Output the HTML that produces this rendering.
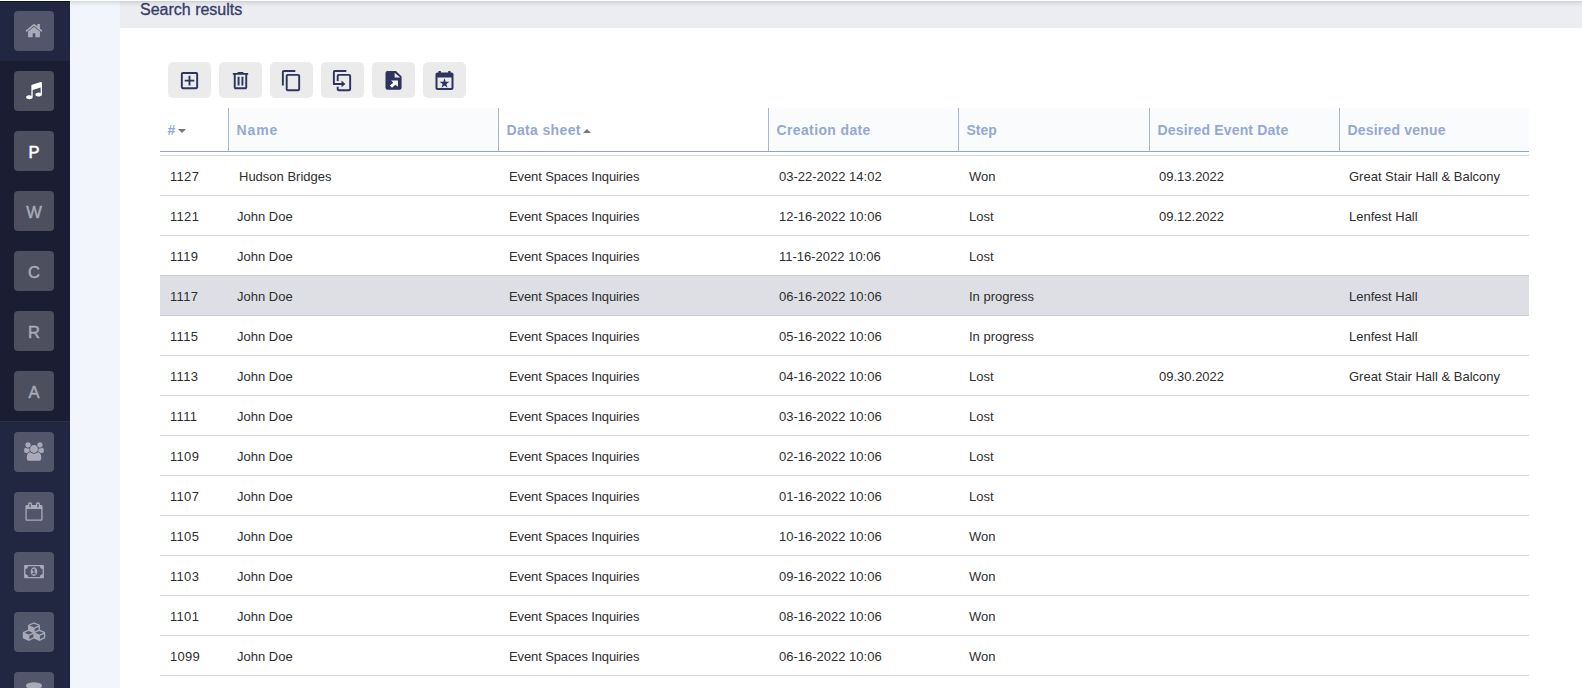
<!DOCTYPE html>
<html lang="en"><head><meta charset="utf-8"><title>Search results</title>
<style>
*{box-sizing:border-box}
html,body{margin:0;padding:0}
body{width:1582px;height:688px;overflow:hidden;position:relative;background:#f2f6fc;font-family:"Liberation Sans","DejaVu Sans",sans-serif;font-size:13px;color:#2e2e2e}
#side{position:absolute;left:0;top:0;width:70px;height:688px;background:#1b1e33}
#side .s1{position:absolute;left:0;top:0;width:70px;height:61px;background:#212741}
#side .s2{position:absolute;left:0;top:421px;width:70px;height:267px;background:#212741;border-top:1px solid #2a2f48}
.sb{position:absolute;left:14px;width:40px;height:40px;border-radius:4px;background:rgba(255,255,255,0.22);color:#a8aab8;font-size:16.500px;text-align:center;line-height:42px;-webkit-text-stroke:0.5px}
.sb.on{color:#fff}
.sb svg{position:absolute;fill:#a8aab8}
.sb.on svg{fill:#fff}
#side .lt{background:#535870}
#panel{position:absolute;left:120px;top:0;width:1462px;height:688px;background:#fff}
#hdr{position:absolute;left:120px;top:0;width:1462px;height:28px;background:#ecedf1}
#hdr span{position:absolute;left:20px;top:0px;font-size:16px;color:#3a3d6b;line-height:20px;-webkit-text-stroke:0.35px #3a3d6b}
#shade{position:absolute;left:70px;top:1px;width:1512px;height:6px;background:linear-gradient(rgba(10,20,60,0.14),rgba(10,20,60,0.05) 40%,rgba(10,20,60,0))}
#topw{position:absolute;left:0;top:0;width:1582px;height:1px;background:#fff}
#topd{position:absolute;left:0;top:1px;width:70px;height:1px;background:#10132d}
.tb{position:absolute;top:62px;width:43px;height:36px;border-radius:5px;background:#ebebeb}
.tb svg{position:absolute;left:9px;top:6px;fill:#2e345f}
#th{position:absolute;left:160px;top:108px;width:1369px;height:44px;border-bottom:1px solid #8ea6cf;background:#fafbfd}
#th div{position:absolute;top:0;height:43px;border-left:1px solid #a9b5cc;padding-left:7.500px;line-height:45px;font-weight:bold;font-size:14px;color:#95a9d0;white-space:nowrap}
#th div.w{background:#fff}
#th div:first-child{border-left:none}
#gl{position:absolute;left:160px;top:155px;width:1369px;height:1px;background:#d6d6d6}
.row{position:absolute;left:160px;width:1369px;height:40px;border-bottom:1px solid #d6d6d6}
.row .c2{letter-spacing:-0.12px}
.row .c0{letter-spacing:0.3px}
.row span{position:absolute;top:0;line-height:42px;white-space:nowrap}
.row.sel{background:#dddfe4;border-bottom-color:#c9ccd3;box-shadow:0 -1px 0 #c9ccd3}
.arr{display:inline-block;width:0;height:0;border-left:4px solid transparent;border-right:4px solid transparent;vertical-align:middle;margin-left:3px}
.arr.d{border-top:4px solid #777}
.arr.u{border-bottom:4px solid #777}
</style></head><body>
<div id="panel"></div>
<div id="hdr"><span>Search results</span></div>
<div id="shade"></div>
<div id="side"><div class="s1"></div><div class="s2"></div>
<div class="sb " style="top:11px"><svg class="fa " style="left:10px;top:11px" width="19" height="16" viewBox="0 0 19 16"><path transform="translate(0.750,-0.635) scale(0.010324)" d="M1472 992v480q0 26-19 45t-45 19h-384v-384h-256v384h-384q-26 0-45-19t-19-45v-480q0-1 .5-3t.5-3l575-474 575 474q1 2 1 6zm223-69l-62 74q-8 9-21 11h-3q-13 0-21-7l-692-577-692 577q-12 8-24 7-13-2-21-11l-62-74q-8-10-7-23.500t11-21.500l719-599q32-26 76-26t76 26l244 204v-195q0-14 9-23t23-9h192q14 0 23 9t9 23v408l219 182q10 8 11 21.500t-7 23.500z"/></svg></div>
<div class="sb on" style="top:71px"><svg class="fa " style="left:11px;top:10px" width="18" height="20" viewBox="0 0 18 20"><path transform="translate(-0.250,-0.311) scale(0.010324)" d="M1664 224v1120q0 50-34 89t-86 60.500-103.500 32-96.500 10.500-96.500-10.500-103.500-32-86-60.500-34-89 34-89 86-60.500 103.500-32 96.500-10.500q105 0 192 39v-537l-768 237v709q0 50-34 89t-86 60.500-103.500 32-96.500 10.500-96.500-10.500-103.500-32-86-60.500-34-89 34-89 86-60.500 103.500-32 96.500-10.500q105 0 192 39v-967q0-31 19-56.500t49-35.500l832-256q12-4 28-4 40 0 68 28t28 68z"/></svg></div>
<div class="sb on" style="top:131px">P</div>
<div class="sb " style="top:191px">W</div>
<div class="sb " style="top:251px">C</div>
<div class="sb " style="top:311px">R</div>
<div class="sb " style="top:371px">A</div>
<div class="sb " style="top:432px"><svg class="fa " style="left:9px;top:9px" width="22" height="21" viewBox="0 0 22 21"><path transform="translate(1.750,1.350) scale(0.010324)" d="M529 896q-162 5-265 128h-134q-82 0-138-40.500t-56-118.500q0-353 124-353 6 0 43.500 21t97.500 42.500 119 21.500q67 0 133-23-5 37-5 66 0 139 81 256zm1071 637q0 120-73 189.500t-194 69.500h-874q-121 0-194-69.500t-73-189.500q0-53 3.500-103.500t14-109 26.500-108.500 43-97.500 62-81 85.500-53.500 111.500-20q10 0 43 21.500t73 48 107 48 135 21.500 135-21.500 107-48 73-48 43-21.500q61 0 111.500 20t85.500 53.500 62 81 43 97.500 26.500 108.500 14 109 3.500 103.500zm-1024-1277q0 106-75 181t-181 75-181-75-75-181 75-181 181-75 181 75 75 181zm704 384q0 159-112.500 271.500t-271.500 112.500-271.500-112.500-112.500-271.500 112.500-271.500 271.500-112.500 271.500 112.500 112.500 271.500zm576 225q0 78-56 118.500t-138 40.500h-134q-103-123-265-128 81-117 81-256 0-29-5-66 66 23 133 23 59 0 119-21.500t97.500-42.500 43.500-21q124 0 124 353zm-128-609q0 106-75 181t-181 75-181-75-75-181 75-181 181-75 181 75 75 181z"/></svg></div>
<div class="sb " style="top:492px"><svg class="fa " style="left:10px;top:9px" width="20" height="21" viewBox="0 0 20 21"><path transform="translate(0.750,1.350) scale(0.010324)" d="M192 1664h1408v-1024h-1408v1024zm384-1216v-288q0-14-9-23t-23-9h-64q-14 0-23 9t-9 23v288q0 14 9 23t23 9h64q14 0 23-9t9-23zm768 0v-288q0-14-9-23t-23-9h-64q-14 0-23 9t-9 23v288q0 14 9 23t23 9h64q14 0 23-9t9-23zm384-64v1280q0 52-38 90t-90 38h-1408q-52 0-90-38t-38-90v-1280q0-52 38-90t90-38h128v-96q0-66 47-113t113-47h64q66 0 113 47t47 113v96h384v-96q0-66 47-113t113-47h64q66 0 113 47t47 113v96h128q52 0 90 38t38 90z"/></svg></div>
<div class="sb " style="top:552px"><svg class="fa " style="left:9px;top:11px" width="22" height="16" viewBox="0 0 22 16"><path transform="translate(1.089,-0.650) scale(0.010324)" d="M768 1152h384v-96h-128v-448h-114l-148 137 77 80q42-37 55-57h2v288h-128v96zm512-256q0 70-21 142t-59.500 134-101.500 101-138 39-138-39-101.500-101-59.500-134-21-142 21-142 59.500-134 101.500-101 138-39 138 39 101.500 101 59.500 134 21 142zm512 256v-512q-106 0-181-75t-75-181h-1152q0 106-75 181t-181 75v512q106 0 181 75t75 181h1152q0-106 75-181t181-75zm128-832v1152q0 26-19 45t-45 19h-1792q-26 0-45-19t-19-45v-1152q0-26 19-45t45-19h1792q26 0 45 19t19 45z"/></svg></div>
<div class="sb " style="top:612px"><svg class="fa " style="left:7px;top:9px" width="25" height="21" viewBox="0 0 25 21"><path transform="translate(1.768,1.350) scale(0.010324)" d="M640 1632l384-192v-314l-384 164v342zm-64-454l404-173-404-173-404 173zm1088 454l384-192v-314l-384 164v342zm-64-454l404-173-404-173-404 173zm-448-293l384-165v-266l-384 164v267zm-64-379l441-189-441-189-441 189zm1088 518v416q0 36-19 67t-52 47l-448 224q-25 14-57 14t-57-14l-448-224q-4-2-7-4-2 2-7 4l-448 224q-25 14-57 14t-57-14l-448-224q-33-16-52-47t-19-67v-416q0-38 21.500-70t56.500-48l434-186v-400q0-38 21.500-70t56.500-48l448-192q23-10 50-10t50 10l448 192q35 16 56.500 48t21.500 70v400l434 186q36 16 57 48t21 70z"/></svg></div>
<div class="sb " style="top:672px"><svg class="fa " style="left:11px;top:9px" width="18" height="21" viewBox="0 0 18 21"><path transform="translate(-0.250,1.350) scale(0.010324)" d="M896 768q237 0 443-43t325-127v170q0 69-103 128t-280 93.500-385 34.500-385-34.500-280-93.500-103-128v-170q119 84 325 127t443 43zm0 768q237 0 443-43t325-127v170q0 69-103 128t-280 93.500-385 34.500-385-34.500-280-93.500-103-128v-170q119 84 325 127t443 43zm0-384q237 0 443-43t325-127v170q0 69-103 128t-280 93.500-385 34.500-385-34.500-280-93.500-103-128v-170q119 84 325 127t443 43zm0-1152q208 0 385 34.500t280 93.500 103 128v128q0 69-103 128t-280 93.500-385 34.500-385-34.500-280-93.500-103-128v-128q0-69 103-128t280-93.500 385-34.500z"/></svg></div>
</div>
<div class="tb" style="left:168px"><svg viewBox="0 0 26 26" width="26" height="26"><g transform="translate(1,1.1) scale(0.958)"><path d="M19 3H5c-1.11 0-2 .9-2 2v14c0 1.1.89 2 2 2h14c1.1 0 2-.9 2-2V5c0-1.1-.9-2-2-2zm0 16H5V5h14v14zm-8-2h2v-4h4v-2h-4V7h-2v4H7v2h4z"/></g></svg></div>
<div class="tb" style="left:219px"><svg viewBox="0 0 26 26" width="26" height="26"><g transform="translate(1,1.1) scale(0.958)"><path d="M7 21q-.825 0-1.412-.587Q5 19.825 5 19V6H4V4h5V3h6v1h5v2h-1v13q0 .825-.587 1.413Q17.825 21 17 21ZM17 6H7v13h10ZM9 17h2V8H9Zm4 0h2V8h-2ZM7 6v13Z"/></g></svg></div>
<div class="tb" style="left:270px"><svg viewBox="0 0 26 26" width="26" height="26"><g transform="translate(1,1.1) scale(0.958)"><path d="M16 1H4c-1.1 0-2 .9-2 2v14h2V3h12V1zm3 4H8c-1.1 0-2 .9-2 2v14c0 1.1.9 2 2 2h11c1.1 0 2-.9 2-2V7c0-1.1-.9-2-2-2zm0 16H8V7h11v14z"/></g></svg></div>
<div class="tb" style="left:321px"><svg viewBox="0 0 26 26" width="26" height="26"><g transform="translate(1,1.1) scale(0.958)"><path d="M16 1H4c-1.1 0-2 .9-2 2v13.5h9V19l4-3.500-4-3.500v2.500H4V3h12z"/><path d="M19 5H8c-1.1 0-2 .9-2 2v5.500h2V7h11v14H8v-2.500H6V21c0 1.100.9 2 2 2h11c1.100 0 2-.9 2-2V7c0-1.100-.9-2-2-2z"/></g></svg></div>
<div class="tb" style="left:372px"><svg viewBox="0 0 26 26" width="26" height="26"><g transform="translate(0.5,0.5)"><path d="M6 2.400h8.500l5.600 5.600v11.300a2 2 0 0 1-2 2H6a2 2 0 0 1-2-2V4.400a2 2 0 0 1 2-2z"/><path fill="#ebebeb" d="M13.100 4.200v4.800h5.700z"/><path fill="#fff" d="M16.400 12.100H9.600l2.200 2.200-3.500 2.700 2.200 2.200 3.500-2.900 2.400 1.900z"/></g></svg></div>
<div class="tb" style="left:423px"><svg viewBox="0 0 26 26" width="26" height="26"><g transform="translate(0.5,0.8)"><path d="M19 3.700h-1V2.300h-2.300v1.400H8.300V2.300H6v1.400H5c-1.110 0-2 .9-2 2V19.300c0 1.100.89 2 2 2h14c1.100 0 2-.9 2-2V5.700c0-1.100-.9-2-2-2zm0 15.600H5V8.700h14z"/><path transform="translate(12 14.4) scale(1.1) translate(-12 -14.2)" d="M12 9.700l1.060 3.260h3.430l-2.780 2.020 1.060 3.260L12 16.220l-2.770 2.020 1.060-3.260-2.780-2.020h3.430z"/></g></svg></div>
<div id="topw"></div><div id="topd"></div>
<div id="th">
<div class="w" style="left:0;width:68px"><b style="letter-spacing:0px">#</b><i class="arr d"></i></div>
<div style="left:68px;width:270px"><b style="letter-spacing:0.9px">Name</b></div>
<div class="w" style="left:338px;width:270px"><b style="letter-spacing:0.35px">Data sheet</b><i class="arr u" style="margin-left:2px"></i></div>
<div style="left:608px;width:190px"><b style="letter-spacing:0.37px">Creation date</b></div>
<div style="left:798px;width:190px"><b style="letter-spacing:0px">Step</b></div>
<div style="left:989px;width:190px"><b style="letter-spacing:0.18px">Desired Event Date</b></div>
<div style="left:1179px;width:190px"><b style="letter-spacing:0.2px">Desired venue</b></div>
</div>
<div id="gl"></div>
<div class="row" style="top:156px"><span class="c0" style="left:10px">1127</span><span class="c1" style="left:79px">Hudson Bridges</span><span class="c2" style="left:349px">Event Spaces Inquiries</span><span class="c3" style="left:619px">03-22-2022 14:02</span><span class="c4" style="left:809px">Won</span><span class="c5" style="left:999px">09.13.2022</span><span class="c6" style="left:1189px">Great Stair Hall &amp; Balcony</span></div>
<div class="row" style="top:196px"><span class="c0" style="left:10px">1121</span><span class="c1" style="left:77px">John Doe</span><span class="c2" style="left:349px">Event Spaces Inquiries</span><span class="c3" style="left:619px">12-16-2022 10:06</span><span class="c4" style="left:809px">Lost</span><span class="c5" style="left:999px">09.12.2022</span><span class="c6" style="left:1189px">Lenfest Hall</span></div>
<div class="row" style="top:236px"><span class="c0" style="left:10px">1119</span><span class="c1" style="left:77px">John Doe</span><span class="c2" style="left:349px">Event Spaces Inquiries</span><span class="c3" style="left:619px">11-16-2022 10:06</span><span class="c4" style="left:809px">Lost</span></div>
<div class="row sel" style="top:276px"><span class="c0" style="left:10px">1117</span><span class="c1" style="left:77px">John Doe</span><span class="c2" style="left:349px">Event Spaces Inquiries</span><span class="c3" style="left:619px">06-16-2022 10:06</span><span class="c4" style="left:809px">In progress</span><span class="c6" style="left:1189px">Lenfest Hall</span></div>
<div class="row" style="top:316px"><span class="c0" style="left:10px">1115</span><span class="c1" style="left:77px">John Doe</span><span class="c2" style="left:349px">Event Spaces Inquiries</span><span class="c3" style="left:619px">05-16-2022 10:06</span><span class="c4" style="left:809px">In progress</span><span class="c6" style="left:1189px">Lenfest Hall</span></div>
<div class="row" style="top:356px"><span class="c0" style="left:10px">1113</span><span class="c1" style="left:77px">John Doe</span><span class="c2" style="left:349px">Event Spaces Inquiries</span><span class="c3" style="left:619px">04-16-2022 10:06</span><span class="c4" style="left:809px">Lost</span><span class="c5" style="left:999px">09.30.2022</span><span class="c6" style="left:1189px">Great Stair Hall &amp; Balcony</span></div>
<div class="row" style="top:396px"><span class="c0" style="left:10px">1111</span><span class="c1" style="left:77px">John Doe</span><span class="c2" style="left:349px">Event Spaces Inquiries</span><span class="c3" style="left:619px">03-16-2022 10:06</span><span class="c4" style="left:809px">Lost</span></div>
<div class="row" style="top:436px"><span class="c0" style="left:10px">1109</span><span class="c1" style="left:77px">John Doe</span><span class="c2" style="left:349px">Event Spaces Inquiries</span><span class="c3" style="left:619px">02-16-2022 10:06</span><span class="c4" style="left:809px">Lost</span></div>
<div class="row" style="top:476px"><span class="c0" style="left:10px">1107</span><span class="c1" style="left:77px">John Doe</span><span class="c2" style="left:349px">Event Spaces Inquiries</span><span class="c3" style="left:619px">01-16-2022 10:06</span><span class="c4" style="left:809px">Lost</span></div>
<div class="row" style="top:516px"><span class="c0" style="left:10px">1105</span><span class="c1" style="left:77px">John Doe</span><span class="c2" style="left:349px">Event Spaces Inquiries</span><span class="c3" style="left:619px">10-16-2022 10:06</span><span class="c4" style="left:809px">Won</span></div>
<div class="row" style="top:556px"><span class="c0" style="left:10px">1103</span><span class="c1" style="left:77px">John Doe</span><span class="c2" style="left:349px">Event Spaces Inquiries</span><span class="c3" style="left:619px">09-16-2022 10:06</span><span class="c4" style="left:809px">Won</span></div>
<div class="row" style="top:596px"><span class="c0" style="left:10px">1101</span><span class="c1" style="left:77px">John Doe</span><span class="c2" style="left:349px">Event Spaces Inquiries</span><span class="c3" style="left:619px">08-16-2022 10:06</span><span class="c4" style="left:809px">Won</span></div>
<div class="row" style="top:636px"><span class="c0" style="left:10px">1099</span><span class="c1" style="left:77px">John Doe</span><span class="c2" style="left:349px">Event Spaces Inquiries</span><span class="c3" style="left:619px">06-16-2022 10:06</span><span class="c4" style="left:809px">Won</span></div>
</body></html>
